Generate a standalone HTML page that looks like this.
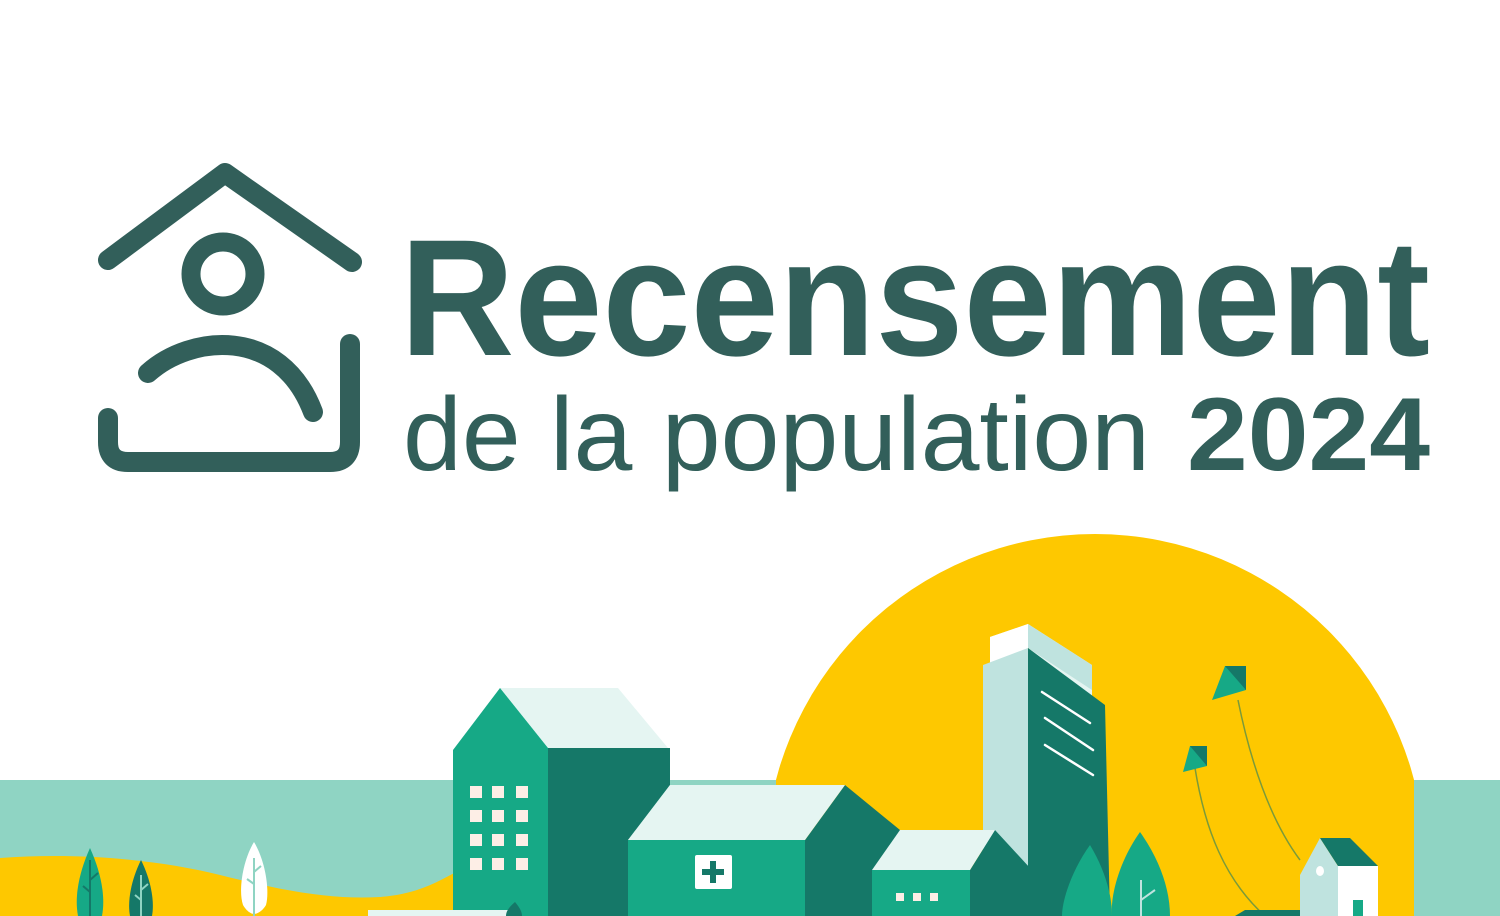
<!DOCTYPE html>
<html><head><meta charset="utf-8"><style>
html,body{margin:0;padding:0;background:#fff;width:1500px;height:916px;overflow:hidden;}
svg{display:block}
</style></head><body>
<svg width="1500" height="916" viewBox="0 0 1500 916" xmlns="http://www.w3.org/2000/svg">
<rect width="1500" height="916" fill="#fff"/>
<g fill="none" stroke="#325f5a" stroke-width="20" stroke-linecap="round" stroke-linejoin="round">
<polyline points="108,260 225,173 352,262"/>
<circle cx="223" cy="274" r="32" stroke-width="19"/>
<path d="M148,373 C190,335 280,325 313,412"/>
<path d="M350,344 V442 Q350,462 330,462 H128 Q108,462 108,442 V418"/>
</g>
<g fill="#325f5a" font-family="Liberation Sans, sans-serif">
<text x="400" y="355" font-size="166" font-weight="bold" textLength="1030" lengthAdjust="spacingAndGlyphs">Recensement</text>
<text x="403" y="470" font-size="104" textLength="747" lengthAdjust="spacingAndGlyphs">de la population</text>
<text x="1187" y="470" font-size="104" font-weight="bold" textLength="243" lengthAdjust="spacingAndGlyphs">2024</text>
</g>
<circle cx="1095" cy="864" r="330" fill="#fec800"/>
<rect x="0" y="780" width="776" height="136" fill="#8fd4c3"/>
<rect x="1414" y="780" width="86" height="136" fill="#8fd4c3"/>
<path d="M0,858 C80,852 160,860 220,875 C280,890 330,900 380,897 C420,894 440,880 460,870 L460,916 L0,916 Z" fill="#fec800"/>
<path d="M90,848 C80,870 74,895 78,916 L102,916 C106,895 100,870 90,848Z" fill="#16a986"/>
<path d="M90,860 V916 M90,880 L98,873 M90,892 L83,886" stroke="#157868" stroke-width="2" fill="none"/>
<path d="M141,860 C132,878 127,900 130,916 L152,916 C155,900 150,878 141,860Z" fill="#157868"/>
<path d="M141,875 V916 M141,890 L148,884 M141,900 L135,895" stroke="#8fd4c3" stroke-width="2" fill="none"/>
<path d="M254,842 C243,860 238,890 243,905 C247,912 252,914 254,914 C256,914 262,912 266,905 C270,890 265,860 254,842Z" fill="#fff"/>
<path d="M254,858 V916 M254,872 L261,866 M254,884 L247,879" stroke="#8fd4c3" stroke-width="2" fill="none"/>
<polygon points="548,748 670,748 670,785 628,840 628,916 548,916" fill="#157868"/>
<polygon points="500,688 618,688 668,748 548,748" fill="#e5f5f2"/>
<polygon points="453,750 500,688 548,748 548,916 453,916" fill="#16a986"/>
<g fill="#fdeee6">
<rect x="470" y="786" width="12" height="12"/><rect x="492" y="786" width="12" height="12"/><rect x="516" y="786" width="12" height="12"/>
<rect x="470" y="810" width="12" height="12"/><rect x="492" y="810" width="12" height="12"/><rect x="516" y="810" width="12" height="12"/>
<rect x="470" y="834" width="12" height="12"/><rect x="492" y="834" width="12" height="12"/><rect x="516" y="834" width="12" height="12"/>
<rect x="470" y="858" width="12" height="12"/><rect x="492" y="858" width="12" height="12"/><rect x="516" y="858" width="12" height="12"/>
</g>
<polygon points="805,840 845,785 900,830 900,916 805,916" fill="#157868"/>
<polygon points="628,840 670,785 845,785 805,840" fill="#e5f5f2"/>
<rect x="628" y="840" width="177" height="76" fill="#16a986"/>
<rect x="695" y="855" width="37" height="34" rx="2" fill="#fff"/>
<path d="M713,861 V883 M702,872 H724" stroke="#157868" stroke-width="6"/>
<polygon points="990,637 1028,624 1092,665 1092,700 1028,648 990,668" fill="#e5f5f2"/>
<polygon points="990,637 1028,624 1028,648 990,668" fill="#fff"/>
<polygon points="1028,624 1092,665 1092,690 1028,648" fill="#bfe3df"/>
<polygon points="983,665 1028,648 1028,880 983,880" fill="#bfe3df"/>
<polygon points="1028,648 1105,705 1110,916 1028,916" fill="#157868"/>
<path d="M1042,692 L1090,723 M1045,718 L1093,750 M1045,745 L1093,775" stroke="#fff" stroke-width="2.5" stroke-linecap="round"/>
<polygon points="970,870 995,830 1030,868 1030,916 970,916" fill="#157868"/>
<polygon points="872,870 900,830 995,830 970,870" fill="#e5f5f2"/>
<rect x="872" y="870" width="98" height="46" fill="#16a986"/>
<g fill="#fdeee6"><rect x="896" y="893" width="8" height="8"/><rect x="913" y="893" width="8" height="8"/><rect x="930" y="893" width="8" height="8"/></g>
<path d="M1090,845 C1072,870 1062,900 1062,916 L1112,916 C1112,895 1105,870 1090,845Z" fill="#16a986"/>
<path d="M1140,832 C1120,860 1110,895 1112,916 L1170,916 C1170,890 1160,860 1140,832Z" fill="#16a986"/>
<path d="M1141,880 V916 M1141,900 L1155,890" stroke="#bfe3df" stroke-width="2" fill="none"/>
<path d="M1238,700 C1250,760 1270,820 1300,860" stroke="#7a9a3a" stroke-width="1.5" fill="none"/>
<path d="M1195,768 C1205,830 1225,880 1265,916" stroke="#7a9a3a" stroke-width="1.5" fill="none"/>
<polygon points="1225,666 1246,666 1246,690 1212,700" fill="#16a986"/>
<polygon points="1225,666 1246,666 1246,690" fill="#157868"/>
<polygon points="1190,746 1207,746 1207,766 1183,772" fill="#16a986"/>
<polygon points="1190,746 1207,746 1207,766" fill="#157868"/>
<polygon points="1300,875 1320,838 1338,866 1338,916 1300,916" fill="#bfe3df"/>
<polygon points="1320,838 1350,838 1378,866 1338,866" fill="#157868"/>
<rect x="1338" y="866" width="40" height="50" fill="#fff"/>
<rect x="1353" y="900" width="10" height="16" fill="#16a986"/>
<ellipse cx="1320" cy="871" rx="4" ry="5" fill="#fff"/>
<polygon points="1235,916 1245,910 1300,910 1300,916" fill="#157868"/>
<rect x="368" y="910" width="140" height="6" fill="#e5f5f2"/>
<path d="M515,902 C508,908 506,912 506,916 L522,916 C522,912 520,908 515,902Z" fill="#157868"/>
</svg>
</body></html>
